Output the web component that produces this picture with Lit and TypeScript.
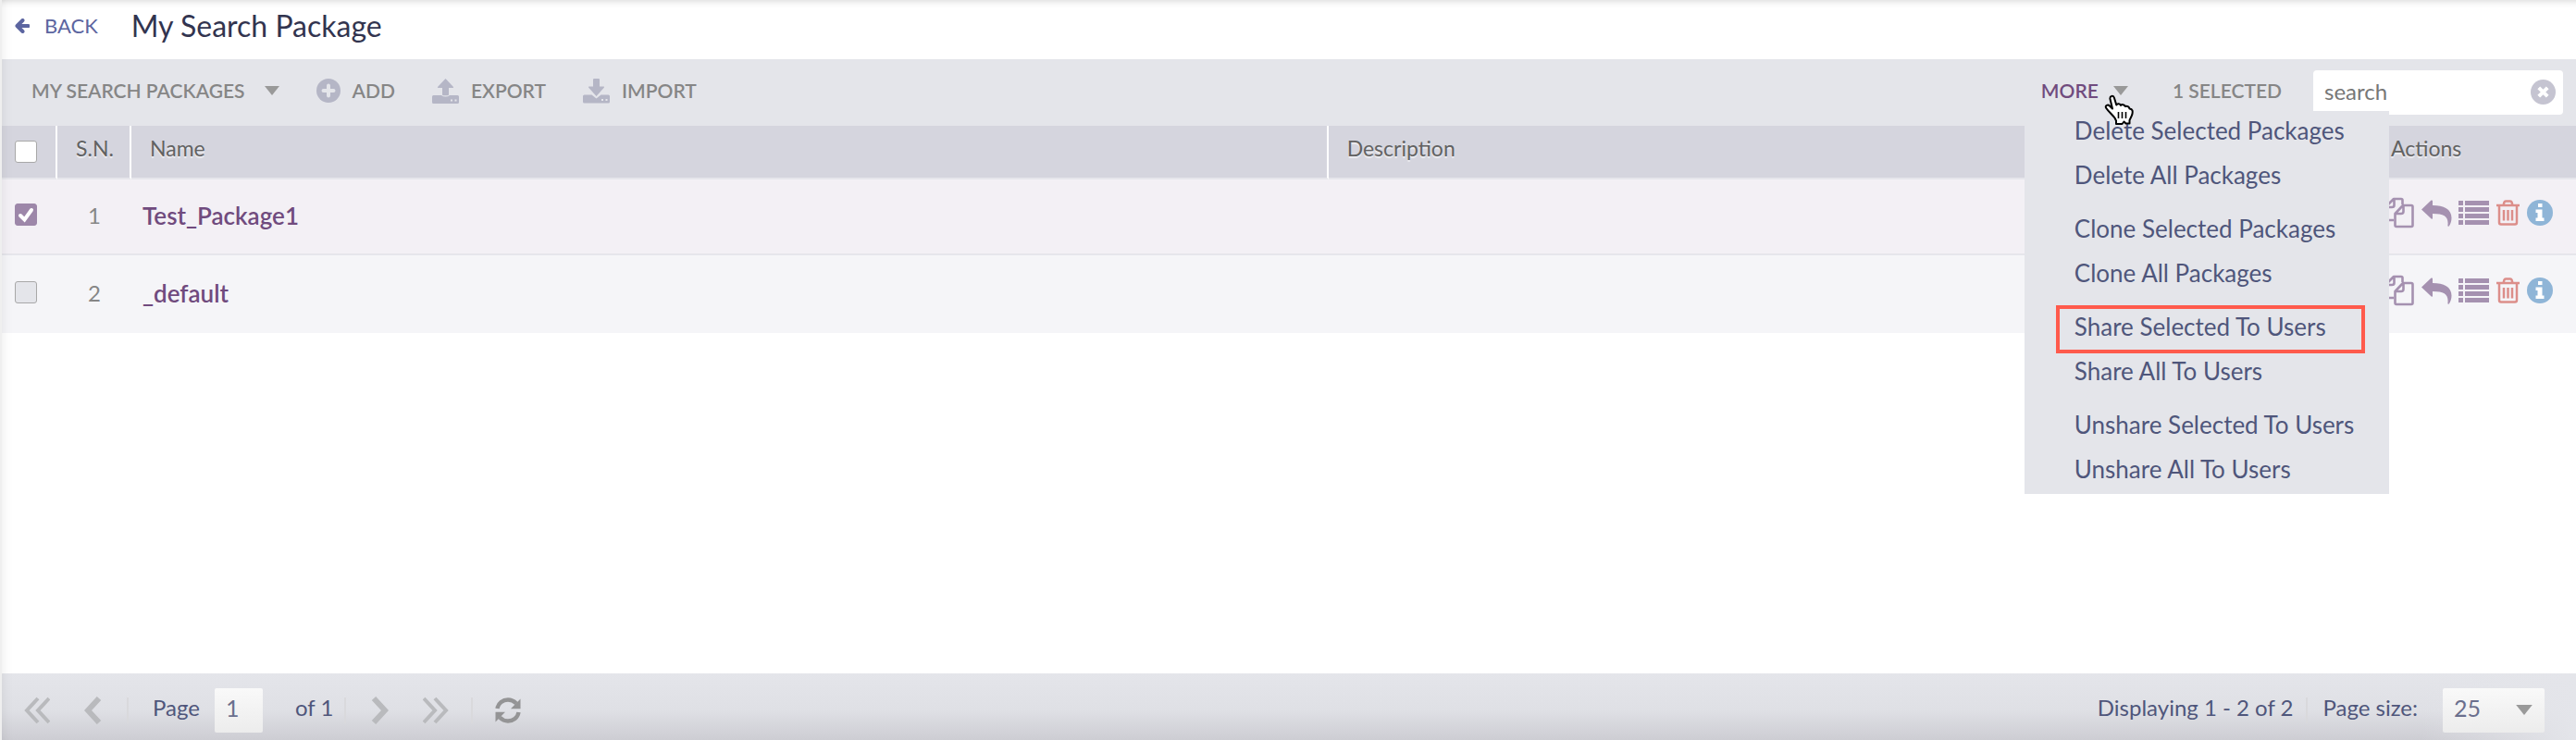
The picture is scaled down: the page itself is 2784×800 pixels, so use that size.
import { LitElement, html, css } from "lit";
import { customElement, state } from "lit/decorators.js";

interface PackageRow {
  name: string;
  selected: boolean;
}

const menuGroups = [
  ["Delete Selected Packages", "Delete All Packages"],
  ["Clone Selected Packages", "Clone All Packages"],
  ["Share Selected To Users", "Share All To Users"],
  ["Unshare Selected To Users", "Unshare All To Users"],
];

const highlighted = "Share Selected To Users";

const caret = html`<svg class="caret" viewBox="0 0 16 10" aria-hidden="true"><path d="M0 0h16L8 10z" /></svg>`;

const arrowLeft = html`<svg class="back-icon" viewBox="0 0 16 16" aria-hidden="true">
  <path d="M8.500 2 2.500 8l6 6M3 8h11.500" fill="none" stroke="currentColor" stroke-width="4" stroke-linecap="round" stroke-linejoin="round" />
</svg>`;

const plus = html`<svg class="tool-icon" viewBox="0 0 26 26" aria-hidden="true">
  <circle cx="13" cy="13" r="13" />
  <path d="M13 7.500v11M7.500 13h11" fill="none" stroke="#e4e5ea" stroke-width="4" stroke-linecap="round" />
</svg>`;

const exportIcon = html`<svg class="drive-icon" viewBox="0 0 29 27" aria-hidden="true">
  <path fill-rule="evenodd" d="M1.500 18H10q1.500 1.500 4.500 1.500T19 18h8.500q1.500 0 1.500 1.500v6q0 1.500-1.500 1.500h-26Q0 27 0 25.500v-6Q0 18 1.500 18zM20 22.500v2h2v-2zM24.500 22.500v2h2v-2z" />
  <path d="M14.500 0 23 9q.5 1-.7 1H18v7q0 1.200-1.200 1.200h-4.600Q11 18.200 11 17v-7H6.700Q5.500 10 6 9z" />
</svg>`;

const importIcon = html`<svg class="drive-icon" viewBox="0 0 29 27" aria-hidden="true">
  <path fill-rule="evenodd" d="M1.500 17.500H9.500l5 4 5-4h8q1.500 0 1.500 1.500v6q0 1.500-1.500 1.500h-26Q0 26.500 0 25v-6q0-1.500 1.500-1.500zM20 22v2h2v-2zM24.500 22v2h2v-2z" />
  <path d="M11 1q0-1 1-1h5q1 0 1 1v7.500h4.500q1 .3.300 1.200L14.500 19 6.200 9.700q-.7-.9.300-1.200H11z" />
</svg>`;

const clearIcon = html`<svg class="clear-icon" viewBox="0 0 27 27" aria-hidden="true">
  <circle cx="13.500" cy="13.500" r="13.500" fill="#c5c4d1" />
  <path d="m8.800 8.800 9.400 9.400m0-9.400-9.400 9.400" fill="none" stroke="#fff" stroke-width="4" />
</svg>`;

const copyIcon = html`<svg class="act copy" viewBox="0 0 32 34" aria-hidden="true">
  <path d="M10 25H2V10L10 2h8q1.500 0 1.500 1.500V8M2 11h6q2.500 0 2.500-2V2M20 9h9q1.500 0 1.500 1.500v20q0 1.500-1.500 1.500H13q-1.500 0-1.500-1.500V18zM12 18h6q2.500 0 2.500-2.500V9" fill="none" stroke="#a591b0" stroke-width="2.600" stroke-linejoin="round" />
</svg>`;

const replyIcon = html`<svg class="act reply" viewBox="0 0 33 29" aria-hidden="true">
  <path fill="#a591b0" d="M0 10.500 10.500.6Q12 0 12 1.500V6c12 0 20.500 4 20.500 13.500 0 3.500-1 6.500-2.600 8.800-.8 1-1.700.5-1.500-.6C29.500 18.500 25 15 12 15v4.800q0 1.500-1.400.7z" />
</svg>`;

const listIcon = html`<svg class="act list" viewBox="0 0 33 26" aria-hidden="true">
  <path fill="#a591b0" d="M0 0h5v5H0zM7 0h26v5H7zM0 7h5v5H0zM7 7h26v5H7zM0 14h5v5H0zM7 14h26v5H7zM0 21h5v5H0zM7 21h26v5H7z" />
</svg>`;

const trashIcon = html`<svg class="act trash" viewBox="0 0 25 28" aria-hidden="true">
  <path d="M0 6h25M7.500 6 8.500 2.500q.4-1 1.500-1h5q1.100 0 1.500 1L17.500 6M3 6v18.500q0 2 2 2h15q2 0 2-2V6M8 11v11.500M12.500 11v11.500M17 11v11.500" fill="none" stroke="#dc8e8a" stroke-width="2.500" />
</svg>`;

const infoIcon = html`<svg class="act info" viewBox="0 0 28 28" aria-hidden="true">
  <circle cx="14" cy="14" r="14" fill="#8fb5d7" />
  <path fill="#fff" d="M12 4h4.500v4H12zM9.500 10.500h7v9h2V23h-9v-3.500h2V14h-2z" />
</svg>`;

const pointer = html`<svg class="pointer" viewBox="0 0 32 34" aria-hidden="true">
  <path d="M11.500 25.500C9 22 4.500 18.500 2 14.500 1 12 4 10.500 6 12.500l3 3L6.500 5C6 1.500 10 .5 11 4l2.300 7.500c1-2 4-1.500 4.700.5 1.200-1.500 4-1 4.800 1 2-1 4.300.3 4.700 2.500C31 16 31 18 30.500 21c-.5 3-2.500 5-3 7v3.500h-4l-2-2-2 2.500h-6.500v-3.500z" fill="#fff" stroke="#000" stroke-width="2" stroke-linejoin="round" />
  <path d="M15.500 19v7M19.500 19v7M23.500 19v7" stroke="#000" stroke-width="1.600" />
</svg>`;

const chevron = (d: string, w: number, weight: number) => html`<svg class="nav-icon" width=${w} height="30" viewBox="0 0 ${w} 30" aria-hidden="true">
  <path d=${d} fill="none" stroke="#b9babd" stroke-width=${weight} />
</svg>`;

const refreshIcon = html`<svg class="nav-icon" width="28" height="28" viewBox="0 0 28 28" aria-hidden="true">
  <path d="M2.500 12C3.500 6 8.500 2.500 14 2.500c4 0 6.500 1.500 9 4M25.500 16C24.500 22 19.500 25.500 14 25.500c-4 0-6.500-1.500-9-4" fill="none" stroke="#949495" stroke-width="4.400" />
  <path d="M27.500 1.500v10.700H17zM.5 26.500V15.800H11z" fill="#949495" />
</svg>`;

@customElement("app-root")
export class AppRoot extends LitElement {
  @state() private rows: PackageRow[] = [
    { name: "Test_Package1", selected: true },
    { name: "_default", selected: false },
  ];

  static styles = css`
    :host {
      display: flex;
      flex-direction: column;
      position: relative;
      min-height: 100vh;
      box-sizing: border-box;
      background: #fff;
      color: #4f567b;
      font-family: Lato, "Open Sans", sans-serif;
      font-size: 24px;
      line-height: 32px;
    }
    :host::before {
      content: "";
      position: absolute;
      inset: 0;
      border-left: 2px solid #efefef;
      box-shadow: inset 0 10px 10px -10px #0003, inset 12px 0 12px -10px #0001;
      pointer-events: none;
      z-index: 1;
    }
    *, *::before, *::after { box-sizing: border-box; }
    button, input, select {
      font: inherit;
      color: inherit;
      border: 0;
      margin: 0;
      padding: 0;
      background: none;
    }
    button { display: flex; align-items: center; text-align: left; }
    svg { display: block; flex: none; }
    a { color: inherit; text-decoration: none; }
    .title-bar {
      display: flex;
      align-items: center;
      height: 64px;
      padding: 0 16px 8px;
      gap: 36px;
    }
    .back { display: flex; align-items: center; gap: 16px; color: #5c65a0; font-size: 22px; }
    .back-icon { width: 16px; height: 16px; }
    h1 { margin: 0; font-size: 32px; font-weight: 400; color: #32344f; }
    .toolbar {
      display: flex;
      align-items: center;
      height: 72px;
      padding: 0 14px 0 34px;
      background: #e4e5ea;
      color: #868686;
      font-size: 21px;
      font-weight: 600;
    }
    .tool { gap: 13px; margin-right: 40px; }
    .tool, .more, .count { padding-bottom: 4px; }
    .caret { width: 16px; height: 10px; fill: #999; }
    .picker { gap: 21px; }
    .tool-icon { width: 26px; height: 26px; fill: #b5b6c6; }
    .drive-icon { width: 29px; height: 27px; fill: #b5b6c6; }
    .spacer { flex: 1; }
    .more-wrap { position: relative; margin-right: 48px; }
    .more { gap: 16px; color: #704b7e; }
    .menu {
      position: absolute;
      z-index: 3;
      top: 38px;
      left: -18px;
      width: 394px;
      margin: 0;
      padding: 0 28px 0 36px;
      list-style: none;
      background: #e4e5ea;
      color: #4f567b;
      font-size: 26px;
      font-weight: 400;
    }
    .group { margin: 0; padding: 0; list-style: none; }
    .set + .set { padding-top: 10px; }
    .entry { width: 100%; height: 48px; padding: 0 0 6px 18px; white-space: nowrap; }
    .entry.marked { outline: 4px solid #ff5a4c; outline-offset: -2px; }
    .pointer { position: absolute; z-index: 4; left: 68px; top: 20px; width: 32px; height: 34px; }
    .search {
      position: relative;
      width: 270px;
      height: 48px;
      margin: 0 0 0 34px;
    }
    .search input {
      width: 100%;
      height: 100%;
      padding: 0 50px 4px 12px;
      border-radius: 4px;
      background: #fff;
      color: #777;
      font-size: 24px;
      font-weight: 400;
    }
    .search input::placeholder { color: #777; opacity: 1; }
    .clear { position: absolute; right: 8px; top: 10px; }
    .clear-icon { width: 27px; height: 27px; }
    .grid { padding-left: 2px; flex: 1; }
    table { width: 100%; border-collapse: separate; border-spacing: 0; table-layout: fixed; }
    .c-check { width: 60px; }
    .c-num { width: 80px; }
    .c-name { width: 46.500%; }
    .c-act { width: 210px; }
    th {
      height: 58px;
      padding: 0 0 8px 20px;
      background: #d5d5de;
      border-bottom: 2px solid #e6e6eb;
      border-right: 2px solid #fff;
      color: #626262;
      font-size: 23px;
      font-weight: 400;
      text-align: left;
      text-shadow: 0 2px 1px #fff9;
    }
    th.plain { border-right: 0; }
    th.acts { padding-left: 10px; }
    td { height: 82px; padding: 0 0 2px 12px; background: #f3f0f5; border-bottom: 2px solid #e6e6eb; }
    tr.even td { height: 84px; background: #f5f5f8; border: 0; }
    .check { padding-left: 14px; }
    td.check { padding-bottom: 4px; }
    th.check { padding-bottom: 0; }
    td.num { color: #868686; text-align: center; padding-left: 0; }
    td.acts { padding: 0 0 0 3px; }
    .name { color: #704b7e; font-size: 26px; font-weight: 600; }
    .box {
      display: block;
      appearance: none;
      width: 24px;
      height: 24px;
      border: 1px solid #a8a8a8;
      border-radius: 3px;
      background: #e4e5ea;
    }
    .box.all { background: #fff; }
    .box:checked {
      border-color: #9d87a9;
      background: #9d87a9 url("data:image/svg+xml,%3Csvg xmlns='http://www.w3.org/2000/svg' viewBox='0 0 22 22'%3E%3Cpath d='M5 12l4.500 4.500L17 6' fill='none' stroke='white' stroke-width='4' stroke-linecap='round'/%3E%3C/svg%3E") center / 22px 22px no-repeat;
    }
    .actions { display: flex; align-items: center; padding-bottom: 8px; }
    .act.copy { width: 32px; height: 34px; margin-right: 8px; }
    .act.reply { width: 33px; height: 29px; margin-right: 7px; }
    .act.list { width: 33px; height: 26px; margin-right: 8px; }
    .act.trash { width: 25px; height: 28px; margin-right: 8px; }
    .act.info { width: 28px; height: 28px; }
    .pager {
      display: flex;
      align-items: center;
      height: 72px;
      padding: 8px 34px 0 24px;
      margin-left: 2px;
      background:
        linear-gradient(to right, #e4e5ea00 94%, #e4e5ea),
        linear-gradient(#e4e5ea, #dfe0e5 55%, #cdcdd3);
    }
    .rule { width: 2px; height: 28px; background: #d9d9dc; }
    .text { padding-bottom: 6px; }
    .page { display: flex; align-items: center; gap: 16px; }
    .page input, .select select {
      height: 48px;
      padding: 0 0 6px 12px;
      border-radius: 2px;
      background: linear-gradient(#f9f9f9, #ececec);
      color: #6a6f8d;
      font-size: 25px;
    }
    .page input { width: 52px; }
    .prev { margin: 0 27px 0 37px; }
    .page { margin-left: 26px; }
    .total { margin: 0 12px 0 35px; }
    .next { margin: 0 37px 0 27px; }
    .last { margin-right: 24px; }
    .refresh { margin-left: 24px; }
    .size { display: flex; align-items: center; gap: 27px; margin-left: 16px; }
    .status { margin-right: 14px; }
    .select { position: relative; }
    .select select { display: block; appearance: none; width: 110px; }
    .select .caret { position: absolute; right: 13px; top: 18px; width: 18px; height: 11px; pointer-events: none; }
  `;

  private toggle(index: number) {
    this.rows = this.rows.map((r, i) => (i === index ? { ...r, selected: !r.selected } : r));
  }

  render() {
    const count = this.rows.filter((r) => r.selected).length;
    return html`
      <header class="title-bar">
        <a class="back" href="#">${arrowLeft}<span>BACK</span></a>
        <h1>My Search Package</h1>
      </header>
      <div class="toolbar">
        <button class="tool picker">MY SEARCH PACKAGES ${caret}</button>
        <button class="tool">${plus} ADD</button>
        <button class="tool">${exportIcon} EXPORT</button>
        <button class="tool">${importIcon} IMPORT</button>
        <span class="spacer"></span>
        <div class="more-wrap">
          <button class="more" aria-expanded="true">MORE ${caret}</button>
          <ul class="menu">
            ${menuGroups.map(
              (g) => html`<li class="set"><ul class="group">
                ${g.map((e) => html`<li><button class="entry ${e === highlighted ? "marked" : ""}">${e}</button></li>`)}
              </ul></li>`
            )}
          </ul>
          ${pointer}
        </div>
        <span class="count">${count} SELECTED</span>
        <div class="search">
          <input type="text" placeholder="search" aria-label="search" />
          <button class="clear" aria-label="Clear">${clearIcon}</button>
        </div>
      </div>
      <main class="grid">
        <table>
          <colgroup><col class="c-check" /><col class="c-num" /><col class="c-name" /><col /><col class="c-act" /></colgroup>
          <thead>
            <tr>
              <th class="check"><input class="box all" type="checkbox" aria-label="Select all" /></th>
              <th>S.N.</th>
              <th>Name</th>
              <th class="plain">Description</th>
              <th class="plain acts">Actions</th>
            </tr>
          </thead>
          <tbody>
            ${this.rows.map(
              (r, i) => html`<tr class=${i % 2 ? "even" : "odd"}>
                <td class="check">
                  <input class="box" type="checkbox" aria-label=${r.name} .checked=${r.selected} @change=${() => this.toggle(i)} />
                </td>
                <td class="num">${i + 1}</td>
                <td><a class="name" href="#">${r.name}</a></td>
                <td></td>
                <td class="acts">
                  <div class="actions">
                    <button aria-label="Clone">${copyIcon}</button>
                    <button aria-label="Share">${replyIcon}</button>
                    <button aria-label="List">${listIcon}</button>
                    <button aria-label="Delete">${trashIcon}</button>
                    <button aria-label="Info">${infoIcon}</button>
                  </div>
                </td>
              </tr>`
            )}
          </tbody>
        </table>
      </main>
      <footer class="pager">
        <button aria-label="First page">${chevron("M15 2 3 15l12 13M27 2 15 15l12 13", 28, 4)}</button>
        <button class="prev" aria-label="Previous page">${chevron("M16 2 4 15l12 13", 19, 6)}</button>
        <span class="rule"></span>
        <label class="page"><span class="text">Page</span><input type="text" value="1" /></label>
        <span class="total text">of 1</span>
        <span class="rule"></span>
        <button class="next" aria-label="Next page">${chevron("M3 2l12 13L3 28", 19, 6)}</button>
        <button class="last" aria-label="Last page">${chevron("M1 2l12 13L1 28M13 2l12 13-12 13", 28, 4)}</button>
        <span class="rule"></span>
        <button class="refresh" aria-label="Refresh">${refreshIcon}</button>
        <span class="spacer"></span>
        <span class="status text">Displaying 1 - 2 of 2</span>
        <span class="rule"></span>
        <label class="size"><span class="text">Page size:</span>
          <span class="select"><select><option>25</option></select>${caret}</span>
        </label>
      </footer>
    `;
  }
}
